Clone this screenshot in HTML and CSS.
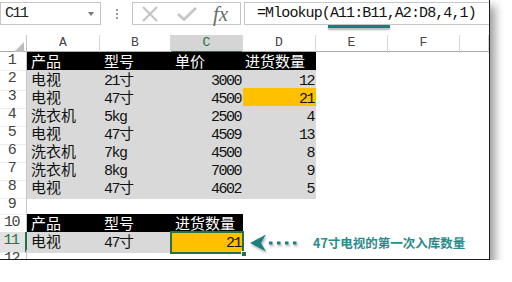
FILE: index.html
```html
<!DOCTYPE html>
<html lang="zh">
<head>
  <meta charset="UTF-8">
  <title>Mlookup</title>
  <link rel="stylesheet" href="styles.css">
</head>
<body>
  <div class="window">
    <!-- formula bar -->
    <div class="fbar">
      <div class="namebox"><span class="m">C11</span><span class="caret"></span></div>
      <div class="grip"><i></i><i></i><i></i></div>
      <div class="fnbox">
        <svg class="ico" width="18" height="16" viewBox="0 0 18 16"><path d="M2 1 L16 15 M16 1 L2 15" stroke="#c4c4c4" stroke-width="2" fill="none"/></svg>
        <svg class="ico chk" width="20" height="14" viewBox="0 0 20 14"><path d="M1 7 L7 12.5 L19 1" stroke="#c8c8c8" stroke-width="3" fill="none"/></svg>
        <span class="fx">fx</span>
      </div>
      <div class="formula">=Mlookup(<span class="ref">A11:B11</span>,A2:D8,4,1)</div>
    </div>

    <!-- column headers -->
    <div class="grid colhead">
      <div class="corner"><svg width="10" height="10" viewBox="0 0 10 10"><path d="M10 0 L10 10 L0 10 Z" fill="#bdbdbd"/></svg></div>
      <div>A</div><div>B</div><div class="cur">C</div><div>D</div><div>E</div><div>F</div><div></div>
    </div>

    <div class="grid row">
      <div class="rh">1</div>
      <div class="c hd">产品</div><div class="c hd">型号</div><div class="c hd">单价</div><div class="c hd d">进货数量</div>
    </div>
    <div class="grid row">
      <div class="rh">2</div>
      <div class="c g">电视</div><div class="c g"><span class="m">21</span>寸</div><div class="c g r"><span class="m">3000</span></div><div class="c g r"><span class="m">12</span></div>
    </div>
    <div class="grid row">
      <div class="rh">3</div>
      <div class="c g">电视</div><div class="c g"><span class="m">47</span>寸</div><div class="c g r"><span class="m">4500</span></div><div class="c o r"><span class="m">21</span></div>
    </div>
    <div class="grid row">
      <div class="rh">4</div>
      <div class="c g">洗衣机</div><div class="c g"><span class="m">5kg</span></div><div class="c g r"><span class="m">2500</span></div><div class="c g r"><span class="m">4</span></div>
    </div>
    <div class="grid row">
      <div class="rh">5</div>
      <div class="c g">电视</div><div class="c g"><span class="m">47</span>寸</div><div class="c g r"><span class="m">4509</span></div><div class="c g r"><span class="m">13</span></div>
    </div>
    <div class="grid row">
      <div class="rh">6</div>
      <div class="c g">洗衣机</div><div class="c g"><span class="m">7kg</span></div><div class="c g r"><span class="m">4500</span></div><div class="c g r"><span class="m">8</span></div>
    </div>
    <div class="grid row">
      <div class="rh">7</div>
      <div class="c g">洗衣机</div><div class="c g"><span class="m">8kg</span></div><div class="c g r"><span class="m">7000</span></div><div class="c g r"><span class="m">9</span></div>
    </div>
    <div class="grid row">
      <div class="rh">8</div>
      <div class="c g">电视</div><div class="c g"><span class="m">47</span>寸</div><div class="c g r"><span class="m">4602</span></div><div class="c g r"><span class="m">5</span></div>
    </div>
    <div class="grid row">
      <div class="rh">9</div>
    </div>
    <div class="grid row">
      <div class="rh">10</div>
      <div class="c hd">产品</div><div class="c hd">型号</div><div class="c hd">进货数量</div>
    </div>
    <div class="grid row">
      <div class="rh cur">11</div>
      <div class="c g">电视</div><div class="c g"><span class="m">47</span>寸</div><div class="c o r sel"><span class="m">21</span><span class="handle"></span></div>
      <div class="note">
        <svg class="arrow" width="48" height="18" viewBox="0 0 48 18">
          <path d="M0 9 L16 0.5 L11 9 L16 17.5 Z" fill="#1c7f80"/>
          <rect x="19" y="7.5" width="3.5" height="3" fill="#1c7f80"/>
          <rect x="27" y="7.5" width="3.5" height="3" fill="#1c7f80"/>
          <rect x="35" y="7.5" width="3.5" height="3" fill="#1c7f80"/>
          <rect x="43" y="7.5" width="3.5" height="3" fill="#1c7f80"/>
        </svg>
        <span class="note-text">47寸电视的第一次入库数量</span>
      </div>
    </div>
    <div class="grid row">
      <div class="rh">12</div>
    </div>
  </div>
</body>
</html>
```

FILE: styles.css
```css
* {
  margin: 0;
  padding: 0;
  box-sizing: border-box;
}

body {
  background: #fff;
  font-family: 'Noto Sans CJK SC', sans-serif;
  color: #111;
}

.window {
  position: relative;
  width: 490px;
  height: 260px;
  background: #fff;
  border-right: 1px solid #1c1c1c;
  border-bottom: 1px solid #1c1c1c;
  box-shadow: 5px 6px 9px rgba(0, 0, 0, 0.4);
  overflow: hidden;
}

.m {
  font-family: 'Liberation Mono', monospace;
  font-size: 15px;
  letter-spacing: -1.5px;
}

/* formula bar */
.fbar {
  display: flex;
  align-items: flex-start;
  height: 35px;
  padding-top: 2px;
}

.namebox {
  width: 101px;
  height: 23px;
  border: 1px solid #c6c6c6;
  display: flex;
  align-items: center;
  justify-content: space-between;
  padding: 0 6px 0 4px;
  color: #222;
}

.caret {
  width: 0;
  height: 0;
  border-left: 3.5px solid transparent;
  border-right: 3.5px solid transparent;
  border-top: 4px solid #777;
}

.grip {
  width: 31px;
  display: flex;
  flex-direction: column;
  align-items: center;
  gap: 2px;
  padding-top: 7px;
}

.grip i {
  width: 2px;
  height: 2px;
  background: #9a9a9a;
}

.fnbox {
  width: 109px;
  height: 23px;
  border: 1px solid #c6c6c6;
  display: flex;
  align-items: center;
  padding-left: 8px;
}

.chk {
  margin-left: 18px;
}

.fx {
  margin-left: 16px;
  font-family: 'Liberation Serif', serif;
  font-style: italic;
  font-size: 21px;
  color: #6b6b6b;
  line-height: 20px;
}

.formula {
  flex: 1;
  height: 23px;
  margin-left: 3px;
  border: 1px solid #c6c6c6;
  border-right: none;
  padding-left: 12px;
  font-family: 'Liberation Mono', monospace;
  font-size: 15px;
  letter-spacing: -0.9px;
  line-height: 21px;
  color: #111;
}

.ref {
  position: relative;
}

.ref::after {
  content: '';
  position: absolute;
  left: -2px;
  right: -3px;
  bottom: -6px;
  height: 3px;
  background: #1e7b7c;
  box-shadow: 0 2px 2px rgba(0, 0, 0, 0.3);
}

/* sheet grid */
.grid {
  display: grid;
  grid-template-columns: 27px 73px 71px 72px 73px 72px 72px 1fr;
}

.colhead {
  height: 17px;
  border-bottom: 1px solid #a8a8a8;
}

.colhead div {
  border-right: 1px solid #d8d8d8;
  font-family: 'Liberation Mono', monospace;
  font-size: 13px;
  color: #444;
  text-align: center;
  line-height: 16px;
}

.colhead .corner {
  display: flex;
  justify-content: flex-end;
  align-items: flex-end;
  padding: 0 2px 1px 0;
  border-right: 1px solid #c6c6c6;
}

.colhead .cur {
  background: #d5d5d5;
  color: #217346;
  border-bottom: 2px solid #217346;
}

.row {
  height: 18px;
}

.rh {
  border-right: 1px solid #c6c6c6;
  border-bottom: 1px solid #ececec;
  text-align: center;
  padding-right: 3px;
  font-family: 'Liberation Mono', monospace;
  font-size: 15px;
  letter-spacing: -1.5px;
  line-height: 18px;
  color: #444;
}

.rh.cur {
  background: #e2e2e2;
  color: #217346;
  border-right: 2px solid #217346;
}

.c {
  padding: 0 3px 0 4px;
  font-size: 15px;
  line-height: 18px;
  white-space: nowrap;
}

.c.r {
  text-align: right;
  padding-right: 2px;
}

.c.d {
  padding-left: 2px;
}

.hd {
  background: #000;
  color: #fff;
}

.g {
  background: #d9d9d9;
}

.o {
  background: #ffc000;
}

.sel {
  position: relative;
  outline: 2px solid #217346;
  outline-offset: -1px;
}

.handle {
  position: absolute;
  right: -4px;
  bottom: -4px;
  width: 6px;
  height: 6px;
  background: #217346;
  border: 1px solid #fff;
}

.note {
  grid-column: 5 / -1;
  display: flex;
  align-items: center;
  padding-left: 7px;
}

.arrow {
  filter: drop-shadow(1px 2px 1px rgba(0, 0, 0, 0.3));
}

.note-text {
  margin-left: 15px;
  font-size: 12.5px;
  font-weight: bold;
  color: #2b8b8b;
  white-space: nowrap;
}
```
